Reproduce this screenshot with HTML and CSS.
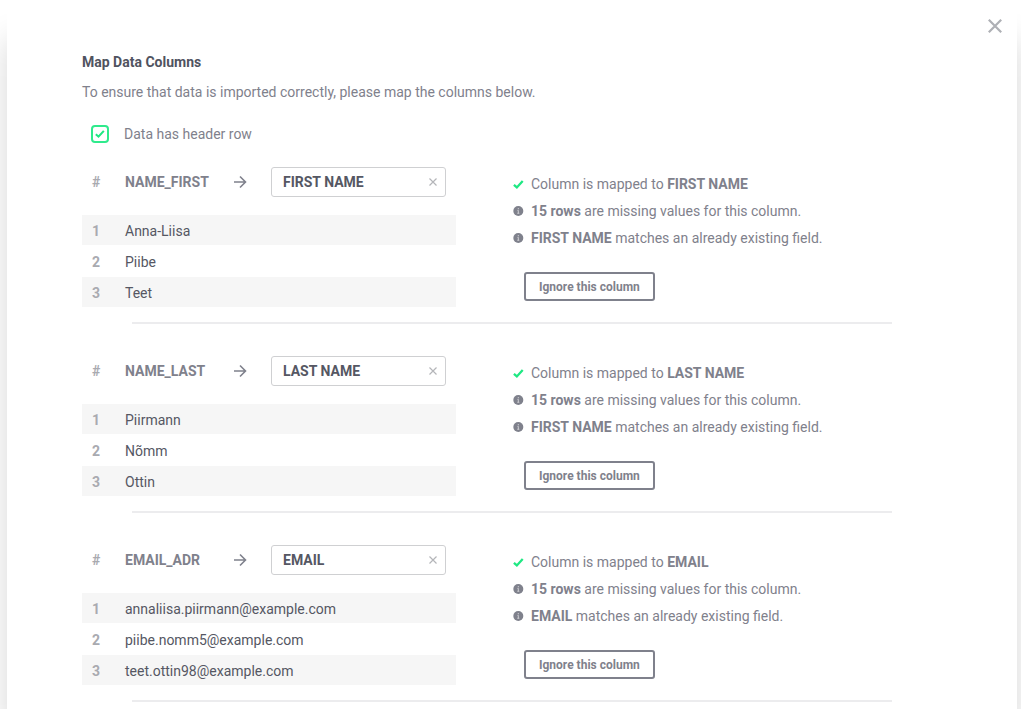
FILE: index.html
```html
<!DOCTYPE html>
<html lang="en">
<head>
<meta charset="utf-8">
<meta name="viewport" content="width=device-width, initial-scale=1">
<title>Map Data Columns</title>
<link rel="stylesheet" href="styles.css">
</head>
<body>
<svg class="sprite" aria-hidden="true">
  <symbol id="arrow" viewBox="0 0 14 14"><path d="M1 7h11.5M7 1.5 12.5 7 7 12.5" fill="none" stroke="currentColor" stroke-width="1.6"/></symbol>
  <symbol id="clear" viewBox="0 0 8 8"><path d="M.5.5l7 7M7.5.5l-7 7" fill="none" stroke="currentColor" stroke-width="1.2"/></symbol>
  <symbol id="check" viewBox="0 0 12 10"><path d="M1 5.4 4.2 8.2 10.6 1.2" fill="none" stroke="currentColor" stroke-width="2.5"/></symbol>
  <symbol id="info" viewBox="0 0 11 11"><circle cx="5.3" cy="5" r="5" fill="currentColor"/><path d="M5.3 2v1.3M4.5 4.4h.8v2.7M4.3 7.3h2" fill="none" stroke="#fff" stroke-opacity=".6" stroke-width="1"/></symbol>
</svg>
<main class="modal">
  <button class="close" type="button" aria-label="Close">
    <svg viewBox="0 0 14 14"><path d="M.8.8l12.4 12.4M13.2.8.8 13.2" fill="none" stroke="currentColor" stroke-width="2.2"/></svg>
  </button>
  <h1 class="title">Map Data Columns</h1>
  <p class="intro">To ensure that data is imported correctly, please map the columns below.</p>
  <label class="option">
    <span class="tick"><input class="tick-input" type="checkbox" checked><svg class="tick-mark"><use href="#check"/></svg></span>
    Data has header row
  </label>

  <section class="mapping">
    <table class="sample">
      <thead><tr>
        <th class="num" scope="col">#</th>
        <th class="source" scope="col">NAME_FIRST</th>
        <td class="to"><svg class="arrow"><use href="#arrow"/></svg></td>
        <td class="target"><div class="field"><input class="field-input" type="text" value="FIRST NAME" aria-label="Field for NAME_FIRST"><button class="clear" type="button" aria-label="Clear field"><svg><use href="#clear"/></svg></button></div></td>
      </tr></thead>
      <tbody>
        <tr><th class="num" scope="row">1</th><td colspan="3">Anna-Liisa</td></tr>
        <tr><th class="num" scope="row">2</th><td colspan="3">Piibe</td></tr>
        <tr><th class="num" scope="row">3</th><td colspan="3">Teet</td></tr>
      </tbody>
    </table>
    <div class="status">
      <ul class="notes">
        <li class="note"><svg class="note-icon ok"><use href="#check"/></svg><span>Column is mapped to <b>FIRST NAME</b></span></li>
        <li class="note"><svg class="note-icon"><use href="#info"/></svg><span><b>15 rows</b> are missing values for this column.</span></li>
        <li class="note"><svg class="note-icon"><use href="#info"/></svg><span><b>FIRST NAME</b> matches an already existing field.</span></li>
      </ul>
      <button class="ignore" type="button">Ignore this column</button>
    </div>
  </section>

  <section class="mapping">
    <table class="sample">
      <thead><tr>
        <th class="num" scope="col">#</th>
        <th class="source" scope="col">NAME_LAST</th>
        <td class="to"><svg class="arrow"><use href="#arrow"/></svg></td>
        <td class="target"><div class="field"><input class="field-input" type="text" value="LAST NAME" aria-label="Field for NAME_LAST"><button class="clear" type="button" aria-label="Clear field"><svg><use href="#clear"/></svg></button></div></td>
      </tr></thead>
      <tbody>
        <tr><th class="num" scope="row">1</th><td colspan="3">Piirmann</td></tr>
        <tr><th class="num" scope="row">2</th><td colspan="3">Nõmm</td></tr>
        <tr><th class="num" scope="row">3</th><td colspan="3">Ottin</td></tr>
      </tbody>
    </table>
    <div class="status">
      <ul class="notes">
        <li class="note"><svg class="note-icon ok"><use href="#check"/></svg><span>Column is mapped to <b>LAST NAME</b></span></li>
        <li class="note"><svg class="note-icon"><use href="#info"/></svg><span><b>15 rows</b> are missing values for this column.</span></li>
        <li class="note"><svg class="note-icon"><use href="#info"/></svg><span><b>FIRST NAME</b> matches an already existing field.</span></li>
      </ul>
      <button class="ignore" type="button">Ignore this column</button>
    </div>
  </section>

  <section class="mapping">
    <table class="sample">
      <thead><tr>
        <th class="num" scope="col">#</th>
        <th class="source" scope="col">EMAIL_ADR</th>
        <td class="to"><svg class="arrow"><use href="#arrow"/></svg></td>
        <td class="target"><div class="field"><input class="field-input" type="text" value="EMAIL" aria-label="Field for EMAIL_ADR"><button class="clear" type="button" aria-label="Clear field"><svg><use href="#clear"/></svg></button></div></td>
      </tr></thead>
      <tbody>
        <tr><th class="num" scope="row">1</th><td colspan="3">annaliisa.piirmann@example.com</td></tr>
        <tr><th class="num" scope="row">2</th><td colspan="3">piibe.nomm5@example.com</td></tr>
        <tr><th class="num" scope="row">3</th><td colspan="3">teet.ottin98@example.com</td></tr>
      </tbody>
    </table>
    <div class="status">
      <ul class="notes">
        <li class="note"><svg class="note-icon ok"><use href="#check"/></svg><span>Column is mapped to <b>EMAIL</b></span></li>
        <li class="note"><svg class="note-icon"><use href="#info"/></svg><span><b>15 rows</b> are missing values for this column.</span></li>
        <li class="note"><svg class="note-icon"><use href="#info"/></svg><span><b>EMAIL</b> matches an already existing field.</span></li>
      </ul>
      <button class="ignore" type="button">Ignore this column</button>
    </div>
  </section>
</main>
</body>
</html>
```

FILE: styles.css
```css
* {
  box-sizing: border-box;
}

body {
  margin: 0;
  padding: 7px 4px 0 7px;
  overflow-x: hidden;
  background: #fff;
  color: #7f818c;
  font: 14px/20px Roboto, sans-serif;
}

.sprite {
  display: none;
}

svg {
  display: block;
}

.modal {
  position: relative;
  min-height: calc(100vh - 7px);
  padding: 45px 125px 0 75px;
  border-radius: 8px 8px 0 0;
  background: #fff;
  box-shadow: 0 32px 32px rgba(0, 0, 0, 0.16);
}

.close {
  position: absolute;
  top: 12px;
  right: 15px;
  padding: 0;
  border: 0;
  background: none;
  color: #aeb0b5;
}

.close svg {
  width: 14px;
  height: 14px;
}

.title {
  margin: 0 0 10px;
  color: #50535f;
  font-size: 14px;
  line-height: 20px;
  font-weight: 700;
}

.intro {
  margin: 0 0 22px;
}

.option {
  display: flex;
  align-items: center;
  gap: 15px;
  width: fit-content;
  margin: 0 0 23px 9px;
}

.tick {
  display: grid;
  place-items: center;
}

.tick > * {
  grid-area: 1 / 1;
}

.tick-input {
  appearance: none;
  width: 18px;
  height: 18px;
  margin: 0;
  border: 2px solid #2fea8c;
  border-radius: 4px;
}

.tick-mark {
  width: 10px;
  height: 10px;
  color: #1fe883;
  pointer-events: none;
}

.mapping {
  display: flex;
  flex-wrap: wrap;
  column-gap: 57px;
  margin-bottom: 32px;
}

.mapping:last-child {
  margin-bottom: 0;
}

.mapping::after {
  content: "";
  flex-basis: 100%;
  height: 2px;
  margin: 15px 0 0 50px;
  background: #ececee;
}

.sample {
  width: 374px;
  border-collapse: separate;
  border-spacing: 0;
  table-layout: fixed;
}

.sample th,
.sample td {
  padding: 0;
  text-align: left;
}

.sample thead th,
.sample thead td {
  height: 48px;
  padding-bottom: 18px;
}

.sample .num {
  width: 43px;
  padding-left: 10px;
  color: #a9aab0;
}

.source {
  width: 108px;
}

.to {
  width: 38px;
}

.arrow {
  width: 14px;
  height: 14px;
}

.sample .target {
  padding-right: 10px;
}

.sample tbody th,
.sample tbody td {
  height: 30px;
  padding-top: 2px;
}

.sample tbody tr + tr > * {
  height: 31px;
  border-top: 1px solid #fff;
}

.sample tbody td {
  color: #555763;
}

.sample tbody tr:nth-child(odd) > * {
  background: #f6f6f6;
}

.field {
  display: flex;
  align-items: center;
  height: 30px;
  padding: 0 8px 0 11px;
  border: 1px solid #cfd0d2;
  border-radius: 3px;
}

.field-input {
  flex: 1;
  min-width: 0;
  padding: 0;
  border: 0;
  outline: 0;
  background: none;
  color: #555763;
  font: inherit;
  font-weight: 700;
}

.clear {
  padding: 0;
  border: 0;
  background: none;
  color: #b4b5b9;
}

.clear svg {
  width: 8px;
  height: 8px;
}

.status {
  padding-top: 4px;
}

.notes {
  margin: 0 0 20px;
  padding: 0;
  list-style: none;
}

.note {
  display: flex;
  align-items: center;
  gap: 7px;
  line-height: 27px;
}

.note-icon {
  width: 11px;
  height: 11px;
}

.ok {
  color: #1fe883;
}

.ignore {
  display: block;
  height: 29px;
  margin-left: 11px;
  padding: 0 13px;
  border: 2px solid #7f818c;
  border-radius: 3px;
  background: #fff;
  color: #7f818c;
  font: 700 12px/20px Roboto, sans-serif;
}
```
